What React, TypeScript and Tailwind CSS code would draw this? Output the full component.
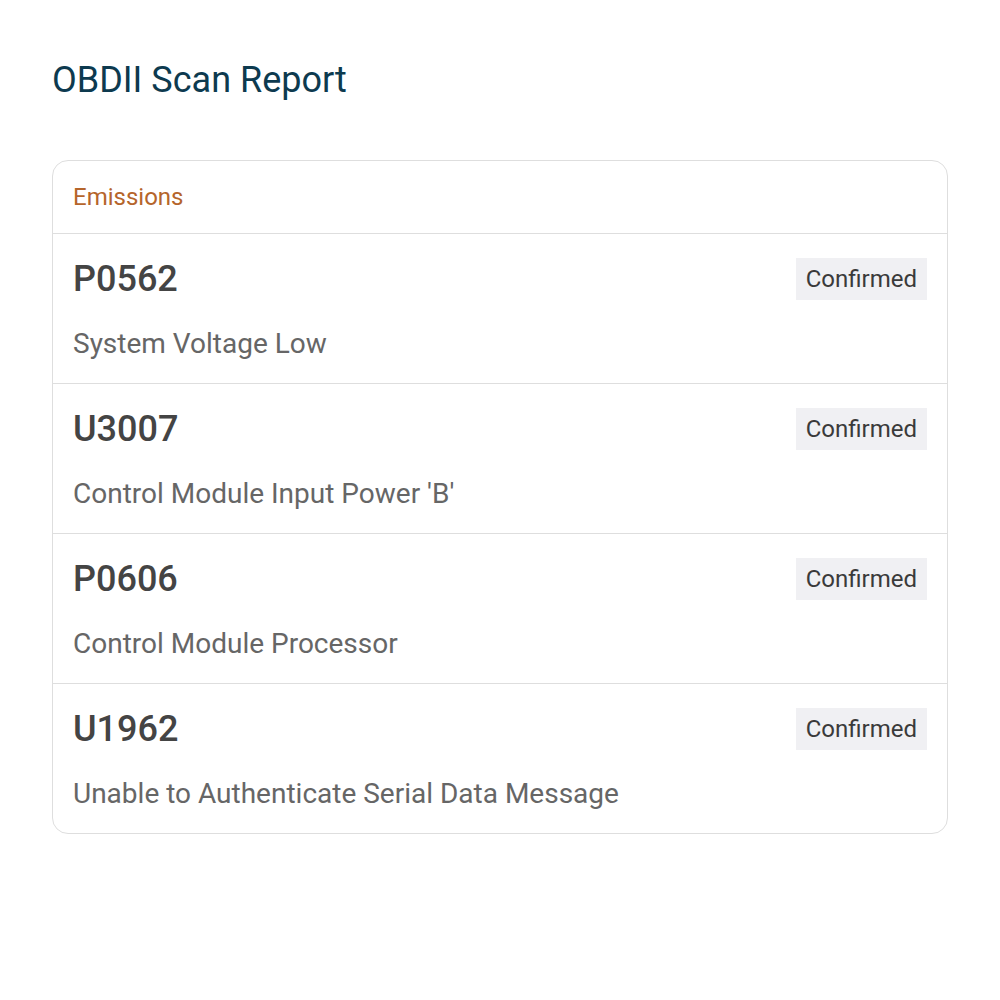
const codes = [
  { code: "P0562", desc: "System Voltage Low" },
  { code: "U3007", desc: "Control Module Input Power 'B'" },
  { code: "P0606", desc: "Control Module Processor" },
  { code: "U1962", desc: "Unable to Authenticate Serial Data Message" },
];

export default function App() {
  return (
    <div
      className="min-h-screen bg-white px-[52px] pt-[60px]"
      style={{ fontFamily: "Roboto, 'Noto Sans', sans-serif" }}
    >
      <h1 className="text-[36px] leading-[40px] text-[#0d3a4f]">OBDII Scan Report</h1>
      <div className="mt-[60px] w-[896px] rounded-2xl border border-[#dedede] overflow-hidden">
        <div className="h-[73px] px-5 flex items-center border-b border-[#dedede]">
          <span className="text-[24px] text-[#b5652b]">Emissions</span>
        </div>
        {codes.map((c, i) => (
          <div
            key={c.code}
            className={
              "px-5 pt-6 pb-[21px] " + (i < codes.length - 1 ? "border-b border-[#dedede]" : "")
            }
          >
            <div className="flex items-center justify-between h-[42px]">
              <span className="text-[36px] font-medium text-[#444444]">{c.code}</span>
              <span className="h-[42px] px-[10px] flex items-center bg-[#f0f0f3] text-[24px] text-[#3a3a3a]">
                Confirmed
              </span>
            </div>
            <div className="mt-[26px] text-[28px] leading-[36px] text-[#666666]">{c.desc}</div>
          </div>
        ))}
      </div>
    </div>
  );
}
